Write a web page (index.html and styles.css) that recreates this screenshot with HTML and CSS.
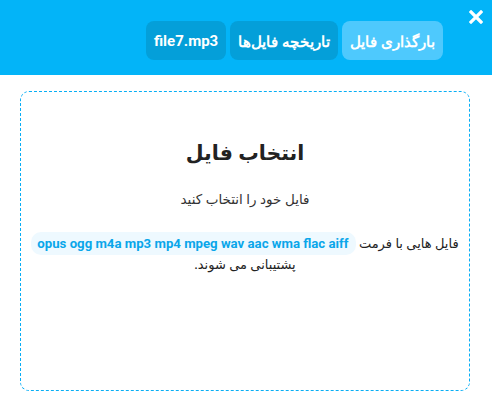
FILE: index.html
```html
<!DOCTYPE html>
<html lang="fa" dir="rtl">
<head>
<meta charset="utf-8">
<link rel="stylesheet" href="styles.css">
</head>
<body>
<header class="header">
  <nav class="tabs">
    <button class="tab active">بارگذاری فایل</button>
    <button class="tab">تاریخچه فایل‌ها</button>
    <button class="tab"><span dir="ltr">file7.mp3</span></button>
  </nav>
  <button class="close" aria-label="close">
    <svg width="14" height="14" viewBox="0 0 14 14"><path d="M2 2L12 12M12 2L2 12" stroke="#fff" stroke-width="3.2" stroke-linecap="square"/></svg>
  </button>
</header>
<main class="main">
  <section class="drop">
    <h1 class="title">انتخاب فایل</h1>
    <p class="sub">فایل خود را انتخاب کنید</p>
    <p class="formats"><span class="line1">فایل هایی با فرمت <span class="pill" dir="ltr">opus ogg m4a mp3 mp4 mpeg wav aac wma flac aiff</span></span> پشتیبانی می شوند.</p>
  </section>
</main>
</body>
</html>
```
FILE: styles.css
```css
* { box-sizing: border-box; }
html, body { margin: 0; padding: 0; background: #fff; }
body { font-family: "Noto Sans", "DejaVu Sans", sans-serif; color: #222; width: 492px; height: 407px; overflow: hidden; }
.header { position: relative; height: 75px; background: #03b4f8; display: flex; align-items: flex-start; justify-content: flex-start; padding: 21px 49px 0 0; }
.tabs { display: flex; gap: 4px; }
.tab { font-family: "Noto Sans", "Roboto", sans-serif; font-weight: 700; font-size: 15px; color: #fff; border: 0; height: 39px; border-radius: 8px; padding: 0 8px; background: #049fd9; display: flex; align-items: center; }
.tab span { font-family: Roboto, sans-serif; }
.tab.active { background: #4ec9fd; }
.close { position: absolute; top: 10px; right: 9px; background: none; border: 0; padding: 0; width: 14px; height: 14px; display: flex; }
.main { padding: 16px 22px 16px 20px; }
.drop { height: 300px; border: 1.5px dashed #08aef5; border-radius: 9px; text-align: center; padding-top: 44px; }
.title { margin: 0; font-size: 20.5px; font-weight: 700; line-height: 32px; color: #222; }
.sub { margin: 18.5px 0 0; font-size: 13.5px; line-height: 24px; color: #333; }
.formats { margin: 22px 0 0; font-size: 13px; line-height: 20px; color: #222; }
.line1 { white-space: nowrap; }
.pill { font-family: Roboto, sans-serif; font-weight: 700; color: #0aa6ea; background: #eef9ff; border-radius: 10px; padding: 4px 7px 4px 6px; font-size: 13.2px; white-space: nowrap; }
```
